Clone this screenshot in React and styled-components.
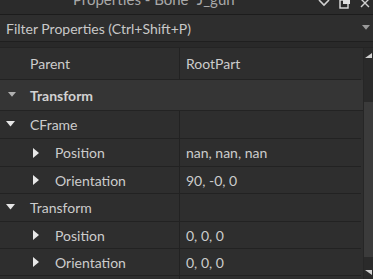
import React from "react";
import styled, { createGlobalStyle } from "styled-components";

const GlobalStyle = createGlobalStyle`
  html, body {
    margin: 0;
    padding: 0;
    background: #2e2e2e;
    overflow: hidden;
  }
  body {
    font-family: Lato, "Noto Sans", sans-serif;
    font-size: 14px;
    color: #cccccc;
  }
`;

const rows = [
  { kind: "prop", name: "Parent", value: "RootPart", depth: 0, h: 31, pad: 7 },
  { kind: "section", name: "Transform", h: 30 },
  { kind: "group", name: "CFrame", h: 27 },
  { kind: "prop", name: "Position", value: "nan, nan, nan", depth: 1, h: 27 },
  { kind: "prop", name: "Orientation", value: "90, -0, 0", depth: 1, h: 26 },
  { kind: "group", name: "Transform", h: 27 },
  { kind: "prop", name: "Position", value: "0, 0, 0", depth: 1, h: 26 },
  { kind: "prop", name: "Orientation", value: "0, 0, 0", depth: 1, h: 26 },
  { kind: "prop", name: "", value: "", depth: 1, h: 26 },
];

const Window = styled.div`
  width: 373px;
  height: 279px;
  display: flex;
  flex-direction: column;
  overflow: hidden;
`;

const TitleBar = styled.div`
  height: 14px;
  flex: none;
  background: #2b2b2b;
  border-bottom: 1px solid #1c1c1c;
  position: relative;
  overflow: hidden;
`;

const TitleText = styled.div`
  position: absolute;
  left: 0;
  right: 60px;
  top: -11px;
  text-align: center;
  font-size: 15px;
  line-height: 20px;
  color: #a9a9a9;
`;

const TitleIcons = styled.div`
  position: absolute;
  right: 3px;
  top: -3px;
  display: flex;
  gap: 9px;
  align-items: center;
`;

const FilterBar = styled.div`
  height: 26px;
  flex: none;
  background: #2e2e2e;
  border-bottom: 1px solid #1f1f1f;
  display: flex;
  align-items: center;
  justify-content: space-between;
  padding: 0 3px 0 6px;
  color: #c8c8c8;
`;

const Gap = styled.div`
  height: 5px;
  flex: none;
  background: #292929;
  border-bottom: 1px solid #242424;
`;

const Body = styled.div`
  flex: 1;
  display: flex;
  min-height: 0;
`;

const Table = styled.div`
  flex: 1;
  display: flex;
  flex-direction: column;
  overflow: hidden;
`;

const Row = styled.div`
  flex: none;
  height: ${(p) => p.h}px;
  display: grid;
  grid-template-columns: 180px 1fr;
  border-bottom: 1px solid #222222;
  background: #2e2e2e;
  margin-right: 2px;
`;

const NameCell = styled.div`
  display: flex;
  align-items: ${(p) => (p.pad ? "flex-start" : "center")};
  padding-top: ${(p) => p.pad || 0}px;
  padding-left: ${(p) => 5 + p.depth * 28}px;
  border-right: 1px solid #222222;
  white-space: nowrap;
`;

const ValueCell = styled.div`
  display: flex;
  align-items: ${(p) => (p.pad ? "flex-start" : "center")};
  padding-top: ${(p) => p.pad || 0}px;
  padding-left: 6px;
  white-space: nowrap;
`;

const Arrow = styled.span`
  width: ${(p) => p.w || 20}px;
  height: 12px;
  flex: none;
  display: flex;
  align-items: center;
  padding-left: ${(p) => p.inset || 0}px;
  box-sizing: border-box;
  margin-right: 5px;
`;

const SectionRow = styled.div`
  flex: none;
  height: ${(p) => p.h}px;
  display: flex;
  align-items: center;
  padding-left: 5px;
  background: #353535;
  border-bottom: 1px solid #232323;
  font-weight: 700;
  color: #d2d2d2;
`;

const ScrollBar = styled.div`
  width: 9px;
  flex: none;
  background: #2a2a2a;
  border-left: 1px solid #262626;
  display: flex;
  flex-direction: column;
  align-items: center;
`;

const ScrollArrow = styled.div`
  height: 14px;
  flex: none;
  display: flex;
  align-items: center;
  justify-content: center;
`;

const Thumb = styled.div`
  width: 100%;
  background: #3b3b3b;
  margin-top: ${(p) => p.top}px;
  height: ${(p) => p.h}px;
`;

const Down = ({ color = "#e6e6e6", size = 9 }) => (
  <svg width={size} height={size * 0.7} viewBox="0 0 10 7">
    <path d="M0 0 L10 0 L5 6 Z" fill={color} />
  </svg>
);

const Right = () => (
  <svg width="6" height="10" viewBox="0 0 6 10">
    <path d="M0 0 L6 5 L0 10 Z" fill="#e8e8e8" />
  </svg>
);

function PropRow({ row }) {
  const open = row.kind === "group";
  return (
    <Row h={row.h}>
      <NameCell depth={row.depth || 0} pad={row.pad}>
        {row.kind === "group" ? (
          <Arrow inset={1}>
            <Down />
          </Arrow>
        ) : row.depth ? (
          <Arrow w={17}>
            <Right />
          </Arrow>
        ) : (
          <Arrow />
        )}
        {row.name}
      </NameCell>
      <ValueCell pad={row.pad}>{open ? "" : row.value}</ValueCell>
    </Row>
  );
}

export default function App() {
  return (
    <Window>
      <GlobalStyle />
      <TitleBar>
        <TitleText>Properties - Bone "J_gun"</TitleText>
        <TitleIcons>
          <svg width="12" height="10" viewBox="0 0 12 10">
            <path d="M1 2 L6 7 L11 2" stroke="#d0d0d0" strokeWidth="1.6" fill="none" />
          </svg>
          <svg width="12" height="12" viewBox="0 0 12 12">
            <rect x="1" y="3" width="8" height="8" fill="none" stroke="#e0e0e0" strokeWidth="1.4" />
            <rect x="4" y="1" width="7" height="6" fill="#e0e0e0" />
          </svg>
          <svg width="10" height="10" viewBox="0 0 10 10">
            <path d="M1 1 L9 9 M9 1 L1 9" stroke="#d0d0d0" strokeWidth="1.4" />
          </svg>
        </TitleIcons>
      </TitleBar>
      <FilterBar>
        <span>Filter Properties (Ctrl+Shift+P)</span>
        <Down color="#9a9a9a" size={8} />
      </FilterBar>
      <Gap />
      <Body>
        <Table>
          {rows.map((row, i) =>
            row.kind === "section" ? (
              <SectionRow key={i} h={row.h}>
                <Arrow inset={3}>
                  <Down color="#b0b0b0" size={8} />
                </Arrow>
                {row.name}
              </SectionRow>
            ) : (
              <PropRow key={i} row={row} />
            )
          )}
        </Table>
        <ScrollBar>
          <ScrollArrow>
            <svg width="7" height="5" viewBox="0 0 7 5">
              <path d="M0 5 L7 5 L7 0 Z" fill="#cfcfcf" />
            </svg>
          </ScrollArrow>
          <Thumb top={40} h={155} />
          <div style={{ flex: 1 }} />
          <ScrollArrow>
            <svg width="7" height="5" viewBox="0 0 7 5">
              <path d="M0 0 L7 0 L7 5 Z" fill="#cfcfcf" />
            </svg>
          </ScrollArrow>
        </ScrollBar>
      </Body>
    </Window>
  );
}
